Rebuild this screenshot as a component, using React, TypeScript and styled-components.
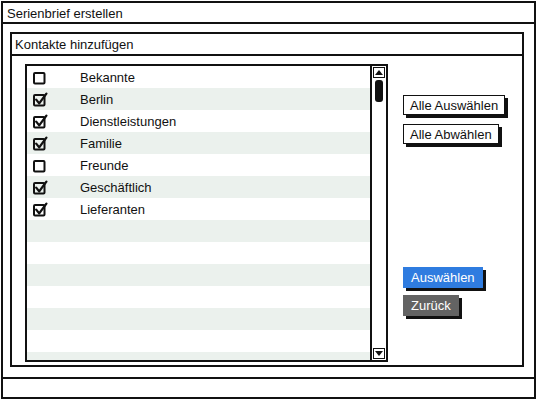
import React from 'react';
import styled, { createGlobalStyle } from 'styled-components';

const GlobalStyle = createGlobalStyle`
  html, body {
    margin: 0;
    padding: 0;
    background: #ffffff;
  }
  body {
    font-family: "Liberation Sans", Arial, sans-serif;
    font-size: 13px;
    color: #111;
  }
`;

const Window = styled.div`
  width: 535px;
  height: 398px;
  margin: 1px;
  display: flex;
  flex-direction: column;
`;

const TitleBar = styled.div`
  height: 18px;
  flex-shrink: 0;
  border: 2px solid #111;
  display: flex;
  align-items: center;
  padding-left: 4px;
  padding-top: 1px;
`;

const WindowBody = styled.div`
  flex: 1;
  min-height: 0;
  border-left: 2px solid #111;
  border-right: 2px solid #111;
  padding: 8px 10px 10px 7px;
  display: flex;
  flex-direction: column;
`;

const StatusBar = styled.div`
  height: 18px;
  flex-shrink: 0;
  border: 2px solid #111;
`;

const Panel = styled.div`
  flex: 1;
  min-height: 0;
  border: 2px solid #111;
  display: flex;
  flex-direction: column;
`;

const PanelHeader = styled.div`
  height: 20px;
  flex-shrink: 0;
  border-bottom: 2px solid #111;
  display: flex;
  align-items: center;
  padding-left: 3px;
`;

const PanelBody = styled.div`
  flex: 1;
  min-height: 0;
  display: flex;
  padding: 8px 0 3px 13px;
`;

const ListBox = styled.div`
  width: 359px;
  border: 2px solid #111;
  display: flex;
  overflow: hidden;
`;

const Rows = styled.div`
  flex: 1;
  min-height: 0;
  overflow: hidden;
  display: flex;
  flex-direction: column;
`;

const Row = styled.div<{ $shaded: boolean }>`
  height: 22px;
  flex-shrink: 0;
  display: flex;
  align-items: center;
  background: ${(p) => (p.$shaded ? '#ebf1ed' : '#ffffff')};
`;

const CheckCell = styled.div`
  width: 47px;
  padding-left: 6px;
  display: flex;
  align-items: center;
`;

const Label = styled.span`
  font-size: 13px;
`;

const ScrollTrack = styled.div`
  width: 14px;
  border-left: 2px solid #111;
  display: flex;
  flex-direction: column;
  justify-content: space-between;
  padding: 1px 0;
`;

const ScrollEnd = styled.div`
  display: flex;
  flex-direction: column;
  align-items: center;
  gap: 2px;
`;

const Arrow = styled.div`
  width: 10px;
  height: 9px;
  border: 1px solid #111;
  display: flex;
  align-items: center;
  justify-content: center;
`;

const Thumb = styled.div`
  width: 8px;
  height: 22px;
  background: #111;
  border-radius: 3px;
`;

const ButtonColumn = styled.div`
  display: flex;
  flex-direction: column;
  align-items: flex-start;
  padding-left: 15px;
  padding-top: 31px;
`;

const OutlineButton = styled.button<{ $gap: number }>`
  margin-top: ${(p) => p.$gap}px;
  height: 20px;
  padding: 0 6px;
  border: 1.5px solid #111;
  background: #fff;
  box-shadow: 3px 3px 0 #111;
  font-family: "Liberation Sans", Arial, sans-serif;
  font-size: 13px;
  color: #111;
`;

const FilledButton = styled.button<{ $bg: string; $gap: number }>`
  margin-top: ${(p) => p.$gap}px;
  height: 21px;
  padding: 0 7px;
  border: 1px solid ${(p) => p.$bg};
  background: ${(p) => p.$bg};
  box-shadow: 3px 3px 0 #111;
  font-family: "Liberation Sans", Arial, sans-serif;
  font-size: 13px;
  color: #fff;
`;

const CheckBox: React.FC<{ checked: boolean }> = ({ checked }) => (
  <svg width="15" height="15" viewBox="0 0 15 15">
    <rect x="1" y="3" width="10.5" height="10.5" rx="1" fill="none" stroke="#111" strokeWidth="2" />
    {checked && (
      <path d="M3.2 7.6 L6.2 11.4 L13.4 1.6" fill="none" stroke="#111" strokeWidth="2.3" strokeLinecap="round" strokeLinejoin="round" />
    )}
  </svg>
);

const contacts = [
  { name: 'Bekannte', checked: false },
  { name: 'Berlin', checked: true },
  { name: 'Dienstleistungen', checked: true },
  { name: 'Familie', checked: true },
  { name: 'Freunde', checked: false },
  { name: 'Geschäftlich', checked: true },
  { name: 'Lieferanten', checked: true },
];

const App: React.FC = () => {
  const rows = Array.from({ length: 14 }, (_, i) => contacts[i] ?? null);
  return (
    <>
      <GlobalStyle />
      <Window>
        <TitleBar>Serienbrief erstellen</TitleBar>
        <WindowBody>
          <Panel>
            <PanelHeader>Kontakte hinzufügen</PanelHeader>
            <PanelBody>
              <ListBox>
                <Rows>
                  {rows.map((c, i) => (
                    <Row key={i} $shaded={i % 2 === 1}>
                      {c && (
                        <>
                          <CheckCell>
                            <CheckBox checked={c.checked} />
                          </CheckCell>
                          <Label>{c.name}</Label>
                        </>
                      )}
                    </Row>
                  ))}
                </Rows>
                <ScrollTrack>
                  <ScrollEnd>
                    <Arrow>
                      <svg width="8" height="5" viewBox="0 0 8 5">
                        <path d="M0 5 L4 0 L8 5 Z" fill="#111" />
                      </svg>
                    </Arrow>
                    <Thumb />
                  </ScrollEnd>
                  <ScrollEnd>
                    <Arrow>
                      <svg width="8" height="5" viewBox="0 0 8 5">
                        <path d="M0 0 L4 5 L8 0 Z" fill="#111" />
                      </svg>
                    </Arrow>
                  </ScrollEnd>
                </ScrollTrack>
              </ListBox>
              <ButtonColumn>
                <OutlineButton $gap={0}>Alle Auswählen</OutlineButton>
                <OutlineButton $gap={9}>Alle Abwählen</OutlineButton>
                <FilledButton $bg="#2f7ce0" $gap={123}>Auswählen</FilledButton>
                <FilledButton $bg="#636363" $gap={7}>Zurück</FilledButton>
              </ButtonColumn>
            </PanelBody>
          </Panel>
        </WindowBody>
        <StatusBar />
      </Window>
    </>
  );
};

export default App;
